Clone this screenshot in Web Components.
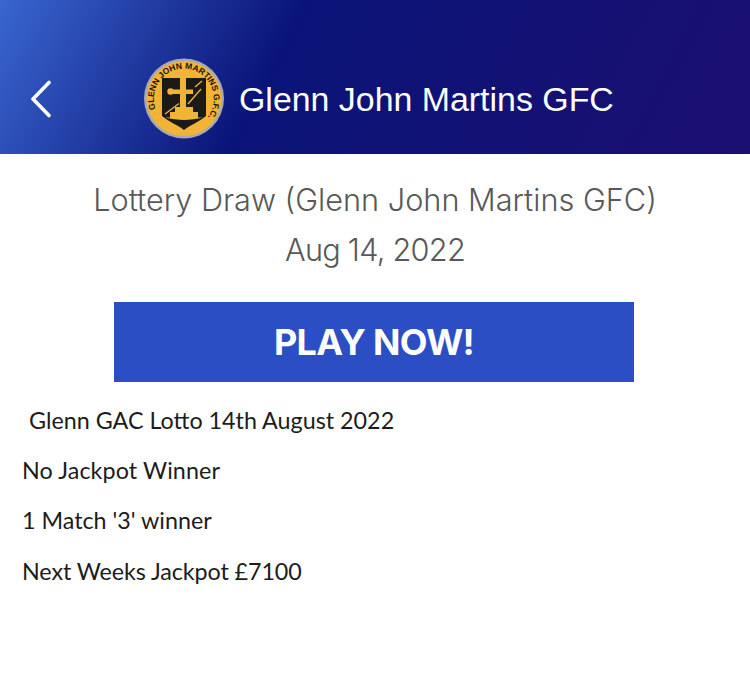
<!DOCTYPE html>
<html>
<head>
<meta charset="utf-8">
<title>Lottery Draw</title>
<style>
html,body{margin:0;padding:0;background:#fff}
</style>
</head>
<body>
<lotto-page>
  <app-header slot="header" title="Glenn John Martins GFC"></app-header>
  <draw-heading name="Lottery Draw (Glenn John Martins GFC)" date="Aug 14, 2022"></draw-heading>
  <play-button>PLAY NOW!</play-button>
  <draw-notes>
    <p style="padding-left:7px">Glenn GAC Lotto 14th August 2022</p>
    <p style="letter-spacing:.1px">No Jackpot Winner</p>
    <p>1 Match '3' winner</p>
    <p style="letter-spacing:-.08px">Next Weeks Jackpot £7100</p>
  </draw-notes>
</lotto-page>
<script>
class LottoPage extends HTMLElement{
  constructor(){
    super()
    this.attachShadow({mode:"open"}).innerHTML=`
      <style>
        :host{display:flex;flex-direction:column;width:750px;height:700px;background:#fff;overflow:hidden}
      </style>
      <slot name="header"></slot>
      <slot></slot>`
  }
}
class ClubCrest extends HTMLElement{
  constructor(){
    super()
    this.attachShadow({mode:"open"}).innerHTML=`
      <style>
        :host{display:block;width:82px;height:82px;flex:none}
        svg{display:block}
        text{font:bold 8.500px "Liberation Sans",sans-serif;fill:#17140c}
      </style>
      <svg width="82" height="82" viewBox="0 0 82 82">
        <defs>
          <path id="ring" d="M12.600 51A30 30 0 1 1 63 61"/>
        </defs>
        <circle cx="41" cy="40.500" r="40" fill="#a9aab0"/>
        <circle cx="41" cy="40.500" r="37.500" fill="#f2b437"/>
        <text><textPath href="#ring">GLENN JOHN MARTINS G.F.C.</textPath></text>
        <path d="M19 20H63V58C56 64 47 67 41 72C35 67 26 64 19 58Z" fill="#1b1a17"/>
        <path d="M37 20H43V31.500H50V36H43V49H50V54H55V59.500H60C54 61 47 62 41 62C35 62 28 61 22 59.500H27V54H32V49H37V36H30V31.500H37Z" fill="#f2b437"/>
        <circle cx="27.500" cy="33.500" r="3.200" fill="#f2b437"/>
        <path d="M22 56L36 45.500M45 46L58 31M52 29L59 23" stroke="#f2b437" stroke-width="1.300" fill="none"/>
      </svg>`
  }
}
class AppHeader extends HTMLElement{
  constructor(){
    super()
    this.attachShadow({mode:"open"}).innerHTML=`
      <style>
        :host{display:flex;align-items:center;height:154px;box-sizing:border-box;padding:44px 0 0 30px;
          background:linear-gradient(118deg,#3966cf 0%,#0a1478 37%,#1b0f70 100%);color:#fff}
        svg.back{display:block;flex:none}
        club-crest{margin-left:91px}
        h1{margin:0 0 0 14px;font:400 33.900px "Liberation Sans",Arial,sans-serif;white-space:nowrap}
      </style>
      <svg class="back" width="22" height="38" viewBox="0 0 22 38"><path d="M19 2.500L3 19L19 35.500" fill="none" stroke="#fff" stroke-width="3.600" stroke-linecap="round" stroke-linejoin="round"/></svg>
      <club-crest></club-crest>
      <h1></h1>`
    this.shadowRoot.querySelector("h1").textContent=this.getAttribute("title")
  }
}
class DrawHeading extends HTMLElement{
  constructor(){
    super()
    this.attachShadow({mode:"open"}).innerHTML=`
      <style>
        :host{display:block;text-align:center;color:#58585a;font:300 30.700px Inter,Lato,sans-serif;padding-top:25px}
        div{height:50px;line-height:42px;white-space:nowrap}
        #d{letter-spacing:-.75px}
      </style>
      <div id="n"></div><div id="d"></div>`
    this.shadowRoot.getElementById("n").textContent=this.getAttribute("name")
    this.shadowRoot.getElementById("d").textContent=this.getAttribute("date")
  }
}
class PlayButton extends HTMLElement{
  constructor(){
    super()
    this.attachShadow({mode:"open"}).innerHTML=`
      <style>
        :host{display:flex;align-items:center;justify-content:center;align-self:center;box-sizing:border-box;
          width:520px;height:80px;margin:23px 0 0 -2px;background:#2c4ec4;color:#fff;
          font:700 36px Inter,Lato,sans-serif;letter-spacing:-.7px}
      </style>
      <slot></slot>`
  }
}
class DrawNotes extends HTMLElement{
  constructor(){
    super()
    this.attachShadow({mode:"open"}).innerHTML=`
      <style>
        :host{display:flex;flex-direction:column;gap:24.400px;padding:24.700px 0 0 22px;color:#1c1c1c;
          font:400 23.300px/26px Lato,"Open Sans",sans-serif}
        ::slotted(p){margin:0;white-space:nowrap}
      </style>
      <slot></slot>`
  }
}
customElements.define("club-crest",ClubCrest)
customElements.define("app-header",AppHeader)
customElements.define("draw-heading",DrawHeading)
customElements.define("play-button",PlayButton)
customElements.define("draw-notes",DrawNotes)
customElements.define("lotto-page",LottoPage)
</script>
</body>
</html>
